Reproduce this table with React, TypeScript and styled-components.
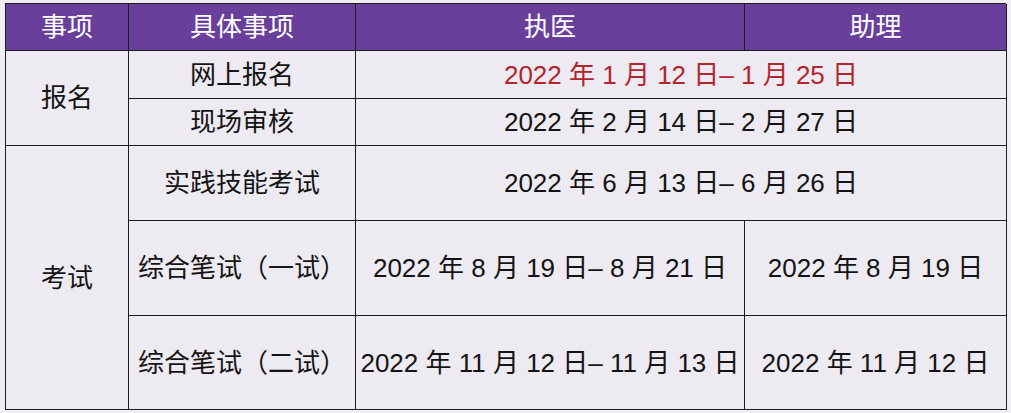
import React from "react";
import styled, { createGlobalStyle } from "styled-components";

const Global = createGlobalStyle`
  html, body { margin: 0; padding: 0; background: #f0eef3; }
  body { font-family: "Liberation Sans", "Noto Sans CJK SC", sans-serif; }
`;

const Page = styled.div`
  padding: 3px 5px;
`;

const Grid = styled.div`
  display: grid;
  grid-template-columns: 123px 227px 389px 262px;
  grid-template-rows: 47px 48px 47px 75px 95px 94px;
  width: 1001px;
  border-left: 1px solid #1c1c1c;
  border-top: 1px solid #1c1c1c;
  box-sizing: border-box;
`;

type CellProps = { $col: string; $row: string; $head?: boolean; $red?: boolean };

const Cell = styled.div<CellProps>`
  grid-column: ${(p) => p.$col};
  grid-row: ${(p) => p.$row};
  display: flex;
  align-items: center;
  justify-content: center;
  border-right: 1px solid #1c1c1c;
  border-bottom: 1px solid #1c1c1c;
  background: ${(p) => (p.$head ? "#6a3f9c" : "#edeaf1")};
  color: ${(p) => (p.$head ? "#ffffff" : p.$red ? "#b1262c" : "#141414")};
  font-size: 26px;
  line-height: 1;
  white-space: nowrap;
`;

const rows: Array<{ col: string; row: string; text: string; head?: boolean; red?: boolean }> = [
  { col: "1", row: "1", text: "事项", head: true },
  { col: "2", row: "1", text: "具体事项", head: true },
  { col: "3", row: "1", text: "执医", head: true },
  { col: "4", row: "1", text: "助理", head: true },
  { col: "1", row: "2 / span 2", text: "报名" },
  { col: "2", row: "2", text: "网上报名" },
  { col: "3 / span 2", row: "2", text: "2022 年 1 月 12 日– 1 月 25 日", red: true },
  { col: "2", row: "3", text: "现场审核" },
  { col: "3 / span 2", row: "3", text: "2022 年 2 月 14 日– 2 月 27 日" },
  { col: "1", row: "4 / span 3", text: "考试" },
  { col: "2", row: "4", text: "实践技能考试" },
  { col: "3 / span 2", row: "4", text: "2022 年 6 月 13 日– 6 月 26 日" },
  { col: "2", row: "5", text: "综合笔试（一试）" },
  { col: "3", row: "5", text: "2022 年 8 月 19 日– 8 月 21 日" },
  { col: "4", row: "5", text: "2022 年 8 月 19 日" },
  { col: "2", row: "6", text: "综合笔试（二试）" },
  { col: "3", row: "6", text: "2022 年 11 月 12 日– 11 月 13 日" },
  { col: "4", row: "6", text: "2022 年 11 月 12 日" },
];

export default function App() {
  return (
    <>
      <Global />
      <Page>
        <Grid>
          {rows.map((r, i) => (
            <Cell key={i} $col={r.col} $row={r.row} $head={r.head} $red={r.red}>
              {r.text}
            </Cell>
          ))}
        </Grid>
      </Page>
    </>
  );
}
